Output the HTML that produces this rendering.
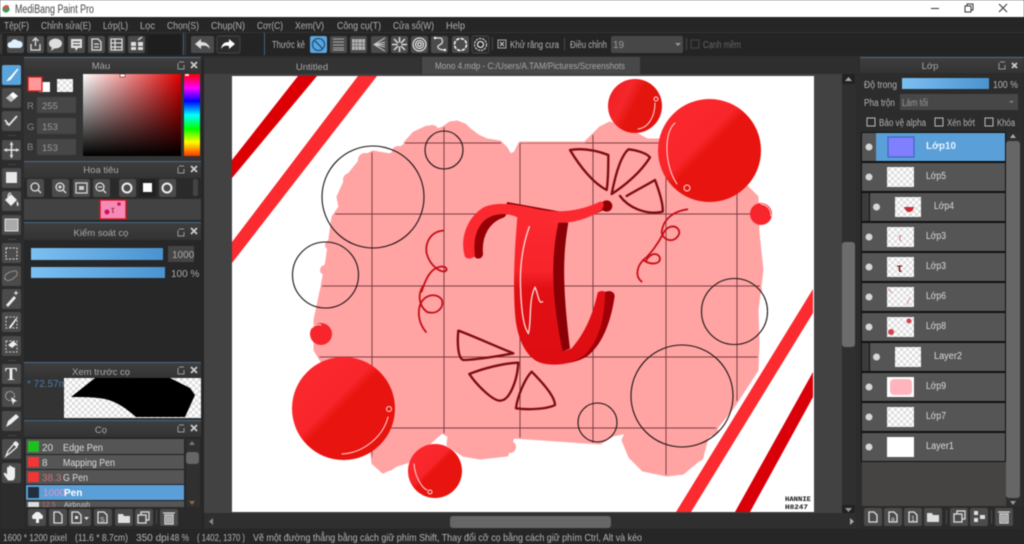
<!DOCTYPE html>
<html><head><meta charset="utf-8"><title>MediBang Paint Pro</title>
<style>
html,body{margin:0;padding:0;background:#262626;width:1024px;height:544px;overflow:hidden}
svg{display:block;position:absolute;left:0;top:0;filter:blur(.4px)}
text{font-family:"Liberation Sans","DejaVu Sans",sans-serif;font-size:10px;fill:#b4b4b4}
.h{fill:#a8a8a8;text-anchor:middle;font-size:9.5px}
.m{font-size:10.5px;fill:#b0b0b0}
.l{fill:#dcdcdc;font-size:10px}
.b{fill:#4b4b4b}
.i{fill:#dedede}
.s{fill:none;stroke:#dedede;stroke-width:1.3}
.p{fill:none;stroke:#1c1413;stroke-width:1.1}
.t{fill:none;stroke:#7c0d12;stroke-width:7;stroke-linejoin:round;stroke-linecap:round}
.c{fill:none;stroke:#c40f18;stroke-width:1.8;stroke-linecap:round}
.hl{fill:none;stroke:#ffdcd8;stroke-width:1;stroke-linecap:round}
.sep{fill:#4a4a4a}
</style></head><body>
<svg width="1024" height="544" viewBox="0 0 1024 544" xmlns="http://www.w3.org/2000/svg">
<defs>
<pattern id="ck" width="10" height="10" patternUnits="userSpaceOnUse"><rect width="10" height="10" fill="#fff"/><rect width="5" height="5" fill="#ddd"/><rect x="5" y="5" width="5" height="5" fill="#ddd"/></pattern>
<pattern id="ck2" width="6" height="6" patternUnits="userSpaceOnUse"><rect width="6" height="6" fill="#fff"/><rect width="3" height="3" fill="#ddd"/><rect x="3" y="3" width="3" height="3" fill="#ddd"/></pattern>
<linearGradient id="sl" x1="0" x2="1" y1="0" y2="0"><stop offset="0" stop-color="#7cc0f2"/><stop offset="1" stop-color="#4a93cf"/></linearGradient>
<linearGradient id="hor" x1="0" x2="1" y1="0" y2="0"><stop offset="0" stop-color="#fff"/><stop offset="1" stop-color="#e00000"/></linearGradient>
<linearGradient id="ver" x1="0" x2="0" y1="0" y2="1"><stop offset="0" stop-color="#000" stop-opacity="0"/><stop offset="1" stop-color="#000"/></linearGradient>
<linearGradient id="hue" x1="0" x2="0" y1="0" y2="1"><stop offset="0" stop-color="#f00"/><stop offset=".17" stop-color="#f0f"/><stop offset=".33" stop-color="#00f"/><stop offset=".5" stop-color="#0ff"/><stop offset=".67" stop-color="#0f0"/><stop offset=".83" stop-color="#ff0"/><stop offset="1" stop-color="#f30"/></linearGradient>
<linearGradient id="ball" x1=".25" y1=".25" x2=".65" y2=".65"><stop offset="0" stop-color="#fa282d"/><stop offset=".42" stop-color="#f8262b"/><stop offset=".6" stop-color="#e8140f"/><stop offset="1" stop-color="#e8140f"/></linearGradient>
<linearGradient id="ball2" x1="0" y1=".1" x2="1" y2=".6"><stop offset="0" stop-color="#ee1f24"/><stop offset=".35" stop-color="#f4272b"/><stop offset=".55" stop-color="#e4150f"/><stop offset="1" stop-color="#e4150f"/></linearGradient>
<linearGradient id="body" gradientUnits="userSpaceOnUse" x1="0" y1="110" x2="0" y2="560"><stop offset="0" stop-color="#fb2a30"/><stop offset=".36" stop-color="#f7242a"/><stop offset=".48" stop-color="#e21015"/><stop offset="1" stop-color="#dd0d12"/></linearGradient>
<linearGradient id="hdr" x1="0" x2="0" y1="0" y2="1"><stop offset="0" stop-color="#3e3e3e"/><stop offset="1" stop-color="#333"/></linearGradient>
<clipPath id="cv"><rect x="232" y="76" width="582" height="436"/></clipPath>
<clipPath id="pk"><polygon points="405,143 414,133 427,127 437,130 443,128 450,123 457,122 465,125 470,130 478,136 487,140 500,142 506,148 510,155 515,153 520,143 585,143 600,128 610,123 625,128 647,140 700,140 747,187 757,197 758,233 762,270 757,310 758,343 757,370 733,407 717,427 707,438 702,457 683,473 667,475 643,470 630,457 623,440 627,432 613,435 600,443 513,437 507,455 480,458 463,455 448,445 449,436 442,432 436,437 425,447 407,462 397,465 383,472 373,463 370,440 315,350 315,320 322,287 327,260 333,217 340,207 338,197 347,177 363,157 373,152 390,155 405,145"/></clipPath>
</defs>

<!-- base -->
<rect width="1024" height="544" fill="#262626"/>
<rect width="1024" height="17" fill="#fff"/>
<rect y="17" width="1024" height="16" fill="#262626"/>
<rect y="33" width="1024" height="23" fill="#242424"/>
<rect y="32" width="1024" height="1" fill="#333"/>
<rect y="56" width="1024" height="1" fill="#2f2f2f"/>

<!-- title bar -->
<circle cx="6" cy="9" r="3.6" fill="#3e9a55"/><path d="M3,8 a3.6,3.6 0 0 1 6,-2 l-2,3z" fill="#d8504c"/>
<text x="15" y="13" style="font-size:11.5px;fill:#444" textLength="79" lengthAdjust="spacingAndGlyphs">MediBang Paint Pro</text>
<rect x="931" y="8" width="8" height="1" fill="#333"/>
<rect x="965" y="6" width="6" height="6" fill="none" stroke="#333"/><path d="M967,6V4h6v6h-2" fill="none" stroke="#333"/>
<path d="M999,4l8,8M1007,4l-8,8" stroke="#333" stroke-width="1"/>

<!-- menu -->
<text class="m" x="4" y="29" textLength="25" lengthAdjust="spacingAndGlyphs">Tệp(F)</text>
<text class="m" x="41" y="29" textLength="50" lengthAdjust="spacingAndGlyphs">Chỉnh sửa(E)</text>
<text class="m" x="103" y="29" textLength="25" lengthAdjust="spacingAndGlyphs">Lớp(L)</text>
<text class="m" x="140" y="29" textLength="15" lengthAdjust="spacingAndGlyphs">Lọc</text>
<text class="m" x="167" y="29" textLength="32" lengthAdjust="spacingAndGlyphs">Chọn(S)</text>
<text class="m" x="211" y="29" textLength="34" lengthAdjust="spacingAndGlyphs">Chụp(N)</text>
<text class="m" x="257" y="29" textLength="26" lengthAdjust="spacingAndGlyphs">Cơr(C)</text>
<text class="m" x="295" y="29" textLength="29" lengthAdjust="spacingAndGlyphs">Xem(V)</text>
<text class="m" x="337" y="29" textLength="44" lengthAdjust="spacingAndGlyphs">Công cụ(T)</text>
<text class="m" x="393" y="29" textLength="41" lengthAdjust="spacingAndGlyphs">Cửa sổ(W)</text>
<text class="m" x="446" y="29" textLength="19" lengthAdjust="spacingAndGlyphs">Help</text>

<!-- toolbar -->
<rect x="0" y="34" width="2" height="20" fill="#3e3e3e"/>
<rect x="7" y="36" width="17" height="17" rx="2" class="b"/><path d="M10,48a3,3 0 0 1 1,-6a4,4 0 0 1 7,-1a3.5,3.5 0 0 1 2,7z" fill="#dff0ff"/>
<rect x="27" y="36" width="17" height="17" rx="2" class="b"/><path d="M31,44v6h9v-6M35.500,46v-8m-3,3l3,-3l3,3" class="s"/>
<rect x="47" y="36" width="17" height="17" rx="2" class="b"/><ellipse cx="55.500" cy="43.500" rx="6.500" ry="5" class="i"/><path d="M52,47l-1,4l4,-3z" class="i"/>
<rect x="68" y="36" width="17" height="17" rx="2" class="b"/><path d="M71,39h11v9h-4l-2,3l-1,-3h-4z" class="i"/><path d="M73,42h7M73,45h7" stroke="#444"/>
<rect x="88" y="36" width="17" height="17" rx="2" class="b"/><path d="M92,39h6l3,3v8h-9z" class="s"/><path d="M94,44h5M94,47h5" class="s"/>
<rect x="108" y="36" width="17" height="17" rx="2" class="b"/><path d="M111,39h11v11h-11zM111,43h11M111,47h11M115,39v11" class="s"/>
<rect x="128" y="36" width="17" height="17" rx="2" class="b"/><path d="M131,42h5v4h-5zM138,42h5v4h-5zM131,47h5v3h-5zM138,47h5v3h-5z" class="i"/><path d="M138,40l4,-3" class="s"/>
<rect x="148" y="35" width="33" height="20" fill="#1e1e1e"/>
<rect x="183" y="33" width="1" height="22" fill="#45617c"/><rect x="185" y="33" width="1" height="22" fill="#3a3a3a"/>
<rect x="191" y="36" width="23" height="17" rx="2" class="b"/><path d="M195,44l6,-5v3c5,0 8,2 9,7c-2,-3 -5,-4 -9,-3v3z" class="i"/>
<rect x="217" y="36" width="23" height="17" rx="2" fill="#2b2b2b" stroke="#444"/><path d="M235,44l-6,-5v3c-5,0 -7,2 -8,7c2,-3 4,-4 8,-3v3z" fill="#fff"/>
<rect x="264" y="33" width="1" height="22" fill="#45617c"/>
<text x="272" y="48" style="font-size:10px" textLength="33" lengthAdjust="spacingAndGlyphs">Thước kẻ</text>
<rect x="310" y="36" width="17" height="17" rx="2" fill="#5ba5dd"/><circle cx="318.500" cy="44.500" r="6" fill="none" stroke="#25547e" stroke-width="1.300"/><path d="M314,40l9,9" stroke="#25547e" stroke-width="1.300"/>
<rect x="330" y="36" width="17" height="17" rx="2" class="b"/><path d="M333,39h11M333,42h11M333,45h11M333,48h11M333,50h11" stroke="#aaa"/>
<rect x="350" y="36" width="17" height="17" rx="2" class="b"/><rect x="352" y="39" width="13" height="11" fill="#b5b5b5"/><path d="M355,39v11M358,39v11M362,39v11M352,43h13M352,46h13" stroke="#666" stroke-width=".7"/>
<rect x="371" y="36" width="17" height="17" rx="2" class="b"/><path d="M385,38l-11,6.500l11,6.500M385,42l-11,2.500h11M385,47l-11,-2.500" stroke="#ccc" fill="none"/>
<rect x="391" y="36" width="17" height="17" rx="2" class="b"/><path d="M399.500,37v15M392,44.500h15M394,39l11,11M405,39l-11,11" stroke="#ddd" stroke-width="1.500"/><circle cx="399.500" cy="44.500" r="2" fill="#4b4b4b"/>
<rect x="411" y="36" width="17" height="17" rx="2" class="b"/><circle cx="419.500" cy="44.500" r="6.500" class="s"/><circle cx="419.500" cy="44.500" r="4" class="s"/><circle cx="419.500" cy="44.500" r="1.800" class="s"/>
<rect x="431" y="36" width="17" height="17" rx="2" class="b"/><path d="M435,38h5c3,0 3,5 1,6l-3,2c-1,3 3,4 8,4" class="s"/><circle cx="435" cy="38" r="1.200" fill="#fff"/><circle cx="445" cy="50" r="1.200" fill="#fff"/>
<rect x="452" y="36" width="17" height="17" rx="2" class="b"/><circle cx="460.500" cy="44.500" r="6" fill="none" stroke="#fff" stroke-width="1.500" stroke-dasharray="3.500 1.200"/>
<rect x="472" y="36" width="17" height="17" rx="2" fill="#2b2b2b" stroke="#444"/><circle cx="480.500" cy="44.500" r="6" fill="none" stroke="#ccc" stroke-width="1.200" stroke-dasharray="2.500 .8"/><circle cx="480.500" cy="44.500" r="3" class="s"/>
<rect x="492" y="37" width="1" height="13" class="sep"/>
<rect x="498" y="40" width="8" height="8" fill="#2c2c2c" stroke="#aaa"/><path d="M500,42l4,4M504,42l-4,4" stroke="#ccc"/>
<text x="510" y="48" style="font-size:10px" textLength="49" lengthAdjust="spacingAndGlyphs">Khử răng cưa</text>
<rect x="564" y="38" width="1" height="12" class="sep"/>
<text x="570" y="48" style="font-size:10px" textLength="37" lengthAdjust="spacingAndGlyphs">Điều chỉnh</text>
<rect x="611" y="36" width="72" height="17" rx="2" fill="#474747"/>
<text x="613" y="48" style="font-size:10px;fill:#999">19</text>
<path d="M675,43h6l-3,3z" fill="#999"/>
<rect x="686" y="38" width="1" height="12" class="sep"/>
<rect x="691" y="40" width="8" height="8" fill="none" stroke="#444"/>
<text x="703" y="48" style="font-size:10px;fill:#666" textLength="38" lengthAdjust="spacingAndGlyphs">Cạnh mềm</text>

<!-- tools column -->
<rect x="0" y="57" width="24" height="472" fill="#2c2c2c"/>
<rect x="2" y="65" width="19" height="20" rx="2" fill="#5ba5dd"/><path d="M6,81c2,-1 2,-3 4,-4l7,-8c1,-1 2,0 1,1l-6,8c-1,2 -3,3 -6,3z" fill="#fff"/>
<rect x="2" y="88" width="19" height="20" rx="2" class="b"/><path d="M6,98l7,-6l5,4l-7,6z" fill="#fff"/><path d="M6,98l4,-3l4,4l-3,3z" fill="#bbb"/>
<rect x="2" y="111" width="19" height="20" rx="2" class="b"/><path d="M5,120l4,5l8,-9" fill="none" stroke="#e5e5e5" stroke-width="1.800"/><circle cx="7" cy="124" r="1" fill="#ddd"/>
<rect x="8" y="135" width="8" height="1" fill="#444"/>
<rect x="2" y="140" width="19" height="20" rx="2" class="b"/><path d="M11.500,142v16M4,150h15" stroke="#e5e5e5" stroke-width="1.500"/><path d="M9.500,145l2,-3l2,3zM9.500,155l2,3l2,-3zM7,148l-3,2l3,2zM16,148l3,2l-3,2z" class="i"/>
<rect x="8" y="164" width="8" height="1" fill="#444"/>
<rect x="2" y="168" width="19" height="20" rx="2" class="b"/><rect x="6" y="172" width="11" height="11" fill="#e8e8e8"/>
<rect x="2" y="191" width="19" height="20" rx="2" class="b"/><path d="M5,200l6,-6l6,6l-6,6z" fill="#eee"/><path d="M8,197c0,-3 1,-4 3,-4" class="s"/><path d="M17,201c2,2 2,4 1,5s-2,-2 -1,-5z" fill="#ddd"/>
<rect x="2" y="215" width="19" height="20" rx="2" class="b"/><rect x="5" y="219" width="13" height="12" fill="#aaa" stroke="#ddd"/>
<rect x="8" y="239" width="8" height="1" fill="#444"/>
<rect x="2" y="243" width="19" height="20" rx="2" class="b"/><rect x="6" y="248" width="11" height="11" fill="none" stroke="#ddd" stroke-dasharray="2 1.500"/>
<rect x="2" y="266" width="19" height="20" rx="2" class="b"/><path d="M5,279c-2,-5 6,-8 10,-8c3,0 3,4 0,6c-3,3 -8,5 -10,2z" fill="none" stroke="#bbb" stroke-dasharray="1.500 1"/>
<rect x="2" y="289" width="19" height="20" rx="2" class="b"/><path d="M6,305l8,-9l2,2l-8,9z" fill="#eee"/><path d="M16,291v4M14,293h4" stroke="#eee"/>
<rect x="2" y="312" width="19" height="20" rx="2" class="b"/><rect x="6" y="317" width="11" height="11" fill="none" stroke="#ccc" stroke-dasharray="2 1.500"/><path d="M9,327l7,-9l1,1l-6,9z" fill="#eee"/>
<rect x="2" y="336" width="19" height="20" rx="2" class="b"/><rect x="6" y="341" width="11" height="11" fill="none" stroke="#ccc" stroke-dasharray="2 1.500"/><path d="M8,345l5,-4l4,3l-5,4z" fill="#eee"/>
<rect x="8" y="360" width="8" height="1" fill="#444"/>
<rect x="2" y="364" width="19" height="20" rx="2" class="b"/><text x="5" y="380" style="font-family:'Liberation Serif',serif;font-size:18px;font-weight:bold;fill:#eee">T</text>
<rect x="2" y="387" width="19" height="20" rx="2" class="b"/><circle cx="10" cy="396" r="4.500" fill="none" stroke="#ccc" stroke-dasharray="1.500 1"/><path d="M11,397l6,4l-3,1l-1,3z" fill="#eee"/>
<rect x="2" y="411" width="19" height="20" rx="2" class="b"/><path d="M6,427l2,-6l8,-7l3,3l-8,7z" fill="#eee"/>
<rect x="8" y="435" width="8" height="1" fill="#444"/>
<rect x="2" y="439" width="19" height="20" rx="2" class="b"/><path d="M6,456l2,-5l6,-7l3,3l-7,6z" fill="none" stroke="#eee" stroke-width="1.300"/><path d="M13,443l3,-2l3,3l-2,3z" fill="#eee"/>
<rect x="2" y="463" width="19" height="20" rx="2" class="b"/><path d="M7,479c-2,-3 -4,-5 -3,-6s3,1 3,2l0,-7c0,-1.500 2,-1.500 2,0v-1.500c0,-1.500 2,-1.500 2,0v1c0,-1.500 2,-1.500 2,0v1c0,-1.500 2,-1.500 2,0v7c0,3 -1,5 -3,5h-4z" fill="#eee"/>

<!-- left panels -->
<rect x="24" y="57" width="178" height="472" fill="#272727"/>
<!-- Màu -->
<rect x="24" y="57" width="177" height="1" fill="#4a6a88"/>
<rect x="24" y="58" width="177" height="16" fill="url(#hdr)"/>
<text class="h" x="101" y="69">Màu</text>
<path d="M179,62h5m-6,1v6h6v-4" fill="none" stroke="#999"/><path d="M191,62l6,6M197,62l-6,6" stroke="#ccc" stroke-width="1.800"/>
<rect x="24" y="74" width="177" height="87" fill="#333"/>
<rect x="39" y="82" width="11" height="10" fill="#fff"/>
<rect x="28" y="77" width="14" height="14" fill="#ff9999" stroke="#d01f1f" stroke-width="1.300"/>
<rect x="57" y="79" width="16" height="13" fill="url(#ck2)"/>
<text x="27" y="109" style="fill:#888;font-size:9.500px">R</text><rect x="37" y="97" width="39" height="16" rx="1" fill="#474747"/><text x="42" y="109" style="fill:#999;font-size:9.500px">255</text>
<text x="27" y="130" style="fill:#888;font-size:9.500px">G</text><rect x="37" y="118" width="39" height="16" rx="1" fill="#474747"/><text x="42" y="130" style="fill:#999;font-size:9.500px">153</text>
<text x="27" y="150" style="fill:#888;font-size:9.500px">B</text><rect x="37" y="139" width="39" height="16" rx="1" fill="#474747"/><text x="42" y="151" style="fill:#999;font-size:9.500px">153</text>
<rect x="83" y="74" width="98" height="82" fill="url(#hor)"/><rect x="83" y="74" width="98" height="82" fill="url(#ver)"/>
<rect x="120" y="74" width="5" height="3" fill="#fff" stroke="#600" stroke-width=".5"/>
<rect x="184" y="74" width="16" height="82" fill="url(#hue)"/>
<rect x="185" y="74" width="4" height="2" fill="#fdd"/>
<!-- Hoa tiêu -->
<rect x="24" y="161" width="177" height="1" fill="#4a6a88"/>
<rect x="24" y="162" width="177" height="16" fill="url(#hdr)"/>
<text class="h" x="101" y="173">Hoa tiêu</text>
<path d="M179,166h5m-6,1v6h6v-4" fill="none" stroke="#999"/><path d="M191,166l6,6M197,166l-6,6" stroke="#ccc" stroke-width="1.800"/>
<rect x="24" y="178" width="177" height="21" fill="#2a2a2a"/>
<rect x="27" y="179" width="17" height="18" rx="2" class="b"/><circle cx="35" cy="187" r="4" class="s"/><path d="M38,190l3,3" class="s"/>
<rect x="52" y="179" width="17" height="18" rx="2" class="b"/><circle cx="60" cy="187" r="4" class="s"/><path d="M63,190l3,3M58,187h4M60,185v4" class="s"/>
<rect x="73" y="179" width="17" height="18" rx="2" class="b"/><rect x="76" y="183" width="11" height="10" fill="none" stroke="#ccc" stroke-width="1.400"/><rect x="79" y="186" width="5" height="4" fill="#ccc"/>
<rect x="93" y="179" width="17" height="18" rx="2" class="b"/><circle cx="100" cy="187" r="4" class="s"/><path d="M103,190l3,3M98,187h4" class="s"/>
<rect x="119" y="179" width="17" height="18" rx="2" class="b"/><circle cx="127" cy="188" r="4.500" fill="none" stroke="#eee" stroke-width="2"/>
<rect x="139" y="179" width="17" height="18" rx="2" fill="#222"/><rect x="143" y="183" width="9" height="9" fill="#fff"/>
<rect x="159" y="179" width="17" height="18" rx="2" class="b"/><circle cx="167" cy="188" r="4.500" fill="none" stroke="#eee" stroke-width="2"/>
<rect x="193" y="179" width="5" height="17" rx="2" fill="#444"/>
<rect x="24" y="199" width="177" height="21" fill="#424242"/>
<rect x="100" y="200" width="26" height="19" fill="#f58ab5" stroke="#d01020" stroke-width="1.300"/>
<circle cx="107" cy="212" r="2.500" fill="#d01060"/><circle cx="119" cy="204" r="1.800" fill="#d01060"/><text x="111" y="213" style="font-size:9px;fill:#901030">τ</text>
<!-- Kiểm soát -->
<rect x="24" y="222" width="177" height="1" fill="#4a6a88"/>
<rect x="24" y="223" width="177" height="17" fill="url(#hdr)"/>
<text class="h" x="101" y="236">Kiểm soát cọ</text>
<path d="M179,229h5m-6,1v6h6v-4" fill="none" stroke="#999"/><path d="M191,228l6,6M197,228l-6,6" stroke="#ccc" stroke-width="1.800"/>
<rect x="31" y="248" width="132" height="12" fill="url(#sl)"/>
<rect x="168" y="246" width="26" height="16" fill="#444"/><text x="172" y="258" style="fill:#aaa;font-size:10px">1000</text>
<rect x="31" y="267" width="134" height="11" fill="url(#sl)"/>
<text x="171" y="277" style="fill:#aaa;font-size:10px">100 %</text>
<!-- Xem trước -->
<rect x="24" y="362" width="177" height="1" fill="#4a6a88"/>
<rect x="24" y="363" width="177" height="15" fill="url(#hdr)"/>
<text class="h" x="101" y="375">Xem trước cọ</text>
<path d="M179,367h5m-6,1v6h6v-4" fill="none" stroke="#999"/><path d="M191,367l6,6M197,367l-6,6" stroke="#ccc" stroke-width="1.800"/>
<rect x="24" y="378" width="177" height="41" fill="#333"/>
<text x="27" y="387" style="fill:#4e7ba5;font-size:10px">* 72.57m</text>
<rect x="64" y="378" width="137" height="40" fill="url(#ck2)"/>
<path d="M71,397L95,378H170L190,388L195,395L185,417H136C128,410 118,402 105,399C95,397 82,397 71,397Z" fill="#000"/>
<!-- Cọ -->
<rect x="24" y="420" width="177" height="1" fill="#4a6a88"/>
<rect x="24" y="421" width="177" height="16" fill="url(#hdr)"/>
<text class="h" x="101" y="433">Cọ</text>
<path d="M179,425h5m-6,1v6h6v-4" fill="none" stroke="#999"/><path d="M191,425l6,6M197,425l-6,6" stroke="#ccc" stroke-width="1.800"/>
<rect x="25" y="439" width="159" height="68" fill="#222"/>
<rect x="26" y="439" width="158" height="15" fill="#555"/>
<rect x="26" y="455" width="158" height="14" fill="#555"/>
<rect x="26" y="470" width="158" height="14" fill="#555"/>
<rect x="26" y="485" width="158" height="15" fill="#5a9fd8"/>
<rect x="26" y="501" width="158" height="6" fill="#555"/>
<rect x="28" y="441" width="11" height="11" fill="#1fbf1f"/>
<rect x="28" y="457" width="11" height="10" fill="#f23535"/>
<rect x="28" y="472" width="11" height="10" fill="#f23535"/>
<rect x="28" y="487" width="11" height="11" fill="#23303c"/>
<rect x="28" y="502" width="11" height="5" fill="#ddd"/>
<text x="42" y="451" class="l">20</text><text x="63" y="451" class="l" textLength="40" lengthAdjust="spacingAndGlyphs">Edge Pen</text>
<text x="42" y="466" class="l">8</text><text x="63" y="466" class="l" textLength="52" lengthAdjust="spacingAndGlyphs">Mapping Pen</text>
<text x="42" y="481" style="fill:#c87474;font-size:10px">38.3</text><text x="63" y="481" class="l" textLength="25" lengthAdjust="spacingAndGlyphs">G Pen</text>
<text x="43" y="496" style="fill:#dd9ac8;font-size:10px">1000</text><text x="64" y="496" style="fill:#fff;font-size:10px;font-weight:bold">Pen</text>
<text x="42" y="507" style="fill:#b87474;font-size:7px">12.5</text><text x="64" y="507" style="fill:#ccc;font-size:7px">Airbrush</text>
<rect x="186" y="439" width="14" height="68" fill="#303030"/>
<path d="M189,445l3,-4l3,4z" fill="#777"/><rect x="186" y="452" width="13" height="12" rx="3" fill="#666"/><path d="M189,501l3,4l3,-4z" fill="#8a6a50"/>
<rect x="24" y="507" width="177" height="22" fill="#2a2a2a"/>
<rect x="28" y="509" width="18" height="17" rx="2" class="b"/><path d="M33,519a3,3 0 0 1 1,-5a4,4 0 0 1 7,0a3,3 0 0 1 1,5h-3v4h-3v-4z" fill="#f0f0f0"/>
<rect x="49" y="509" width="18" height="17" rx="2" class="b"/><path d="M54,512h5l3,3v8h-8z" class="s"/>
<rect x="69" y="509" width="22" height="17" rx="2" class="b"/><path d="M72,512h6l3,3v8h-9z" class="s"/><rect x="75" y="516" width="3" height="3" class="i"/><path d="M84,517h5l-2.500,3z" class="i"/>
<rect x="94" y="509" width="18" height="17" rx="2" class="b"/><path d="M98,512h6l3,3v8h-9z" class="s"/><text x="100" y="522" style="font-size:7px;fill:#ddd">S</text>
<rect x="115" y="509" width="18" height="17" rx="2" class="b"/><path d="M118,514h5l1,2h6v7h-12z" class="i"/>
<rect x="135" y="509" width="18" height="17" rx="2" class="b"/><rect x="141" y="512" width="8" height="8" class="s"/><rect x="138" y="515" width="8" height="8" class="s" style="fill:#4b4b4b"/>
<rect x="156" y="510" width="1" height="14" class="sep"/>
<rect x="160" y="509" width="18" height="17" rx="2" class="b"/><path d="M163,513h12M165,515h8v9h-8zM167,516v7M169,516v7M171,516v7" class="s"/>

<!-- canvas region -->
<rect x="204" y="57" width="654" height="472" fill="#2c2c2c"/>
<rect x="204" y="58" width="654" height="16" fill="#2e2e2e"/>
<rect x="204" y="58" width="216" height="16" fill="#333"/>
<text class="h" x="312" y="70">Untitled</text>
<rect x="422" y="57" width="218" height="17" fill="#484848"/>
<text class="h" x="530" y="69" textLength="190" lengthAdjust="spacingAndGlyphs">Mono 4.mdp - C:/Users/A.TAM/Pictures/Screenshots</text>
<rect x="204" y="74" width="638" height="439" fill="#424242"/>
<rect x="232" y="76" width="582" height="436" fill="#fff"/>

<!-- artwork -->
<g clip-path="url(#cv)">
<polygon points="298,76 317,76 232,178 232,160" fill="#dc0005"/>
<polygon points="358,76 377,76 232,263 232,242" fill="#fb2b30"/>
<polygon points="813,289 813,313 691,512 676,512" fill="#fb2b30"/>
<polygon points="813,372 813,397 750,512 735,512" fill="#d9000a"/>

<g fill="#ffa3a3">
<polygon stroke="#ffa3a3" stroke-width="3" stroke-linejoin="round" points="405,143 414,133 427,127 437,130 443,128 450,123 457,122 465,125 470,130 478,136 487,140 500,142 506,148 510,155 515,153 520,143 585,143 600,128 610,123 625,128 647,140 700,140 747,187 757,197 758,233 762,270 757,310 758,343 757,370 733,407 717,427 707,438 702,457 683,473 667,475 643,470 630,457 623,440 627,432 613,435 600,443 513,437 507,455 480,458 463,455 448,445 449,436 442,432 436,437 425,447 407,462 397,465 383,472 373,463 370,440 315,350 315,320 322,287 327,260 333,217 340,207 338,197 347,177 363,157 373,152 390,155 405,145"/>
<circle cx="432" cy="132" r="7"/><circle cx="457" cy="129" r="7"/><circle cx="350" cy="180" r="7"/><circle cx="344" cy="195" r="6"/><circle cx="365" cy="160" r="7"/><circle cx="638" cy="452" r="8"/><circle cx="655" cy="466" r="8"/><circle cx="680" cy="467" r="8"/><circle cx="697" cy="455" r="7"/><circle cx="470" cy="448" r="7"/><circle cx="495" cy="450" r="7"/><circle cx="752" cy="205" r="7"/><circle cx="755" cy="250" r="6"/><circle cx="757" cy="290" r="5"/><circle cx="388" cy="463" r="8"/><circle cx="320" cy="325" r="6"/><circle cx="325" cy="270" r="5"/><circle cx="612" cy="134" r="11"/><circle cx="338" cy="222" r="6"/><circle cx="330" cy="245" r="5"/><circle cx="380" cy="158" r="6"/><circle cx="398" cy="152" r="6"/><circle cx="485" cy="146" r="6"/><circle cx="752" cy="350" r="5"/><circle cx="735" cy="395" r="6"/><circle cx="712" cy="430" r="6"/><circle cx="510" cy="447" r="6"/><circle cx="322" cy="345" r="6"/>
</g>

<g clip-path="url(#pk)" stroke="#7d3f42" stroke-width="1" fill="none">
<path d="M372,140V480M444,120V480M520,120V480M593,120V480M666,120V480M737,120V480M300,143H770M300,214H770M300,286H770M300,357H770M300,428H770"/>
</g>

<!-- outline circles -->
<circle class="p" cx="373" cy="197" r="51"/>
<circle class="p" cx="444" cy="150" r="19"/>
<circle class="p" cx="325.500" cy="275" r="33"/>
<circle class="p" cx="734.500" cy="311.500" r="33"/>
<circle class="p" cx="682" cy="396" r="51"/>
<circle class="p" cx="597.500" cy="422.500" r="19.500"/>

<!-- balls -->
<circle cx="635" cy="106" r="27" fill="url(#ball2)"/>
<path class="hl" d="M638,129C648,128 655,117 655,103"/><circle class="hl" cx="656" cy="99" r="2"/>
<circle cx="709.500" cy="150.500" r="51.500" fill="url(#ball)"/>
<path class="hl" d="M675,123C663,133 665,167 677,184"/><circle class="hl" cx="687" cy="188" r="3"/>
<circle cx="761" cy="214" r="11" fill="#f7262c"/>
<path class="hl" d="M761,204C768,205 771,210 771,216"/>
<circle cx="321" cy="334" r="11" fill="#f7262c"/>
<path class="hl" d="M312,328C314,325 318,324 321,325"/>
<circle cx="343.500" cy="408.500" r="51.500" fill="url(#ball)"/>
<path class="hl" d="M342,454C363,453 383,437 388,417"/><circle class="hl" cx="389" cy="409" r="2.500"/>
<circle cx="435" cy="471" r="27" fill="url(#ball)"/>
<path class="hl" d="M414,464C415,477 422,488 427,490"/><circle class="hl" cx="430" cy="492" r="2"/>

<!-- curls -->
<g transform="translate(230 70) scale(.3333)">
<path class="c" style="stroke-width:5.400" d="M640,482C600,485 585,520 590,550C600,590 640,615 650,600C650,585 620,585 600,610C585,630 580,650 575,665"/>
</g>
<path class="c" d="M423,286C418,294 418,305 427,312C437,315 444,308 442,300C438,293 425,293 420,305C417,315 420,325 426,332"/>
<g transform="translate(600 70) scale(.3333)">
<path class="c" style="stroke-width:5.400" d="M262,418C215,425 190,450 185,485C185,510 225,525 238,490C238,465 205,460 190,490C175,520 150,555 130,570C110,590 105,620 125,635"/>
<path class="c" style="stroke-width:5.400" d="M130,570C150,585 180,585 180,565C175,545 150,550 140,570"/>
</g>

<!-- triangles -->
<g transform="translate(430 180) scale(.3333)">
<path class="t" d="M85,452C110,460 200,500 250,520C200,530 130,540 100,540C82,535 82,480 85,452Z"/>
<path class="t" d="M118,582C160,565 220,550 265,548C262,600 240,660 212,662C190,665 140,615 118,582Z"/>
<path class="t" d="M305,575C340,610 375,650 375,675C350,688 290,690 258,685C262,650 285,595 305,575Z"/>
</g>
<g transform="translate(600 70) scale(.3333)">
<path class="t" d="M85,238C110,240 140,250 150,262C120,310 70,350 35,372C45,320 60,260 85,238Z"/>
<path class="t" d="M80,378C110,360 140,345 165,330C180,370 190,405 188,425C150,435 90,420 60,378"/>
<path class="t" d="M-90,240C-60,235 -20,238 25,255C25,290 25,330 20,360C-20,340 -60,290 -90,240Z"/>
</g>

<!-- T letter -->
<g transform="translate(430 180) scale(.3333)">
<path d="M145,222C140,160 170,115 215,100" fill="none" stroke="#960006" stroke-width="28" stroke-linecap="round"/>
<path d="M230,72C300,85 360,95 430,108C470,108 500,95 530,78" fill="none" stroke="#8f0005" stroke-width="12"/>
<circle cx="530" cy="78" r="17" fill="#8f0005"/>
<path d="M105,230C88,180 110,110 165,80C220,60 280,80 350,92C410,100 470,85 510,65C522,63 525,75 515,90C470,120 420,130 385,128L262,112C225,95 180,100 155,130C135,155 130,190 135,228C125,238 110,238 105,230Z" fill="#fb2a30"/>
<path d="M525,336C545,328 558,340 553,355C540,440 510,500 470,530C440,548 400,553 370,552L440,505C480,450 505,400 515,345Z" fill="#a00008"/>
<path d="M262,110L385,128C370,210 365,300 385,430L398,515L425,505C465,460 490,400 503,338C510,332 520,332 525,336C525,420 505,480 470,520C430,555 370,560 330,548C285,530 260,470 255,400C248,300 255,200 262,110Z" fill="url(#body)"/>
<path d="M385,128L415,128C400,220 395,300 420,505L398,515C375,400 355,270 385,128Z" fill="#8a0006"/>
<path d="M298,140C280,190 268,250 272,330C274,390 280,440 295,460C305,430 295,360 315,322C325,340 325,375 338,365" fill="none" stroke="#ffdcd8" stroke-width="4" stroke-linecap="round"/>
</g>
<text x="785" y="501" style="font-size:6.500px;font-weight:bold;fill:#111;font-family:'Liberation Mono',monospace" textLength="26" lengthAdjust="spacingAndGlyphs">HANNIE</text>
<text x="785" y="509" style="font-size:6.500px;font-weight:bold;fill:#111;font-family:'Liberation Mono',monospace" textLength="23" lengthAdjust="spacingAndGlyphs">H8247</text>
</g>

<!-- scrollbars -->
<rect x="842" y="74" width="14" height="439" fill="#2f2f2f"/>
<rect x="842" y="74" width="13" height="10" fill="#222"/><path d="M845,81l3.500,-4l3.500,4z" fill="#aaa"/>
<rect x="842" y="242" width="13" height="105" rx="3" fill="#6c6c6c"/>
<rect x="842" y="505" width="13" height="10" fill="#222"/><path d="M845,508l3.500,4l3.500,-4z" fill="#999"/>
<rect x="204" y="513" width="652" height="15" fill="#2f2f2f"/>
<rect x="450" y="516" width="161" height="12" rx="3" fill="#666"/>
<path d="M213,518v7l-4,-3.500z" fill="#888"/><path d="M850,518v7l4,-3.500z" fill="#aaa"/>

<!-- right panel -->
<rect x="858" y="57" width="166" height="472" fill="#2c2c2c"/>
<rect x="860" y="57" width="164" height="1" fill="#4a6a88"/>
<rect x="860" y="58" width="164" height="15" fill="url(#hdr)"/>
<text class="h" x="930" y="69">Lớp</text>
<path d="M1000,62h5m-6,1v6h6v-4" fill="none" stroke="#999"/><path d="M1012,63l5,5M1017,63l-5,5" stroke="#ccc" stroke-width="1.800"/>
<text x="864" y="88" style="font-size:10px" textLength="33" lengthAdjust="spacingAndGlyphs">Độ trong</text>
<rect x="902" y="78" width="87" height="11" fill="url(#sl)"/>
<text x="993" y="88" style="font-size:10px" textLength="25" lengthAdjust="spacingAndGlyphs">100 %</text>
<text x="864" y="106" style="font-size:10px" textLength="31" lengthAdjust="spacingAndGlyphs">Pha trộn</text>
<rect x="900" y="94" width="118" height="16" fill="#474747"/>
<text x="902" y="106" style="font-size:10px;fill:#999" textLength="26" lengthAdjust="spacingAndGlyphs">Làm tối</text>
<path d="M1009,101h5l-2.500,2z" fill="#888"/>
<rect x="867" y="118" width="8" height="8" fill="none" stroke="#bbb"/><text x="879" y="126" style="font-size:10px" textLength="47" lengthAdjust="spacingAndGlyphs">Bảo vệ alpha</text>
<rect x="935" y="118" width="8" height="8" fill="none" stroke="#bbb"/><text x="947" y="126" style="font-size:10px" textLength="28" lengthAdjust="spacingAndGlyphs">Xén bớt</text>
<rect x="985" y="118" width="8" height="8" fill="none" stroke="#bbb"/><text x="997" y="126" style="font-size:10px" textLength="18" lengthAdjust="spacingAndGlyphs">Khóa</text>

<rect x="861" y="132" width="145" height="330" fill="#111"/>
<rect x="862" y="462" width="144" height="44" fill="#454443"/>
<rect x="862" y="133" width="14" height="28" fill="#555"/><rect x="876" y="133" width="129" height="28" fill="#5a9fd8"/>
<rect x="862" y="163" width="143" height="28" fill="#555"/>
<rect x="862" y="193" width="7" height="28" fill="#3c3c3c"/><rect x="870" y="193" width="135" height="28" fill="#555"/>
<rect x="862" y="223" width="143" height="28" fill="#555"/>
<rect x="862" y="253" width="143" height="28" fill="#555"/>
<rect x="862" y="283" width="143" height="28" fill="#555"/>
<rect x="862" y="313" width="143" height="28" fill="#555"/>
<rect x="862" y="343" width="7" height="28" fill="#3c3c3c"/><rect x="870" y="343" width="135" height="28" fill="#555"/>
<rect x="862" y="373" width="143" height="28" fill="#555"/>
<rect x="862" y="403" width="143" height="28" fill="#555"/>
<rect x="862" y="433" width="143" height="28" fill="#555"/>
<g fill="#d6d6d6">
<circle cx="869" cy="147" r="3.500"/><circle cx="869" cy="177" r="3.500"/><circle cx="876.500" cy="207" r="3.500"/><circle cx="869" cy="237" r="3.500"/><circle cx="869" cy="267" r="3.500"/><circle cx="869" cy="297" r="3.500"/><circle cx="869" cy="327" r="3.500"/><circle cx="876.500" cy="357" r="3.500"/><circle cx="869" cy="387" r="3.500"/><circle cx="869" cy="417" r="3.500"/><circle cx="869" cy="447" r="3.500"/>
</g>
<rect x="888" y="137" width="26" height="20" fill="#8080ff" stroke="#3b5fb8"/>
<rect x="887" y="167" width="27" height="20" fill="url(#ck2)"/>
<rect x="895" y="197" width="26" height="20" fill="url(#ck2)"/><path d="M904,207h10c-1,4 -3,5 -5,5s-4,-2 -5,-5z" fill="#c92a35"/>
<rect x="887" y="227" width="27" height="20" fill="url(#ck2)"/><text x="898" y="241" style="font-size:10px;fill:#e06a70">τ</text>
<rect x="887" y="257" width="27" height="20" fill="url(#ck2)"/><text x="897" y="272" style="font-size:12px;fill:#7a1a22;font-weight:bold">τ</text>
<rect x="887" y="287" width="27" height="20" fill="url(#ck2)"/><path d="M888,289l4,4M910,297l-3,8" stroke="#e09090"/>
<rect x="887" y="317" width="27" height="20" fill="url(#ck2)"/><circle cx="891" cy="332" r="3" fill="#d04550"/><circle cx="909" cy="321" r="2.500" fill="#d04550"/>
<rect x="895" y="347" width="26" height="20" fill="url(#ck2)"/>
<rect x="887" y="377" width="27" height="20" fill="#fff"/><rect x="890" y="379" width="22" height="16" rx="4" fill="#ffb5bb"/>
<rect x="887" y="407" width="27" height="20" fill="url(#ck2)"/>
<rect x="887" y="437" width="27" height="20" fill="#fff"/>
<text x="926" y="149" style="font-size:10.500px;font-weight:bold;fill:#eaf4ff" textLength="30" lengthAdjust="spacingAndGlyphs">Lớp10</text>
<text x="926" y="179" class="l" textLength="20" lengthAdjust="spacingAndGlyphs">Lớp5</text>
<text x="934" y="209" class="l" textLength="20" lengthAdjust="spacingAndGlyphs">Lớp4</text>
<text x="926" y="239" class="l" textLength="20" lengthAdjust="spacingAndGlyphs">Lớp3</text>
<text x="926" y="269" class="l" textLength="20" lengthAdjust="spacingAndGlyphs">Lớp3</text>
<text x="926" y="299" class="l" textLength="20" lengthAdjust="spacingAndGlyphs">Lớp6</text>
<text x="926" y="329" class="l" textLength="20" lengthAdjust="spacingAndGlyphs">Lớp8</text>
<text x="934" y="359" class="l" textLength="28" lengthAdjust="spacingAndGlyphs">Layer2</text>
<text x="926" y="389" class="l" textLength="20" lengthAdjust="spacingAndGlyphs">Lớp9</text>
<text x="926" y="419" class="l" textLength="20" lengthAdjust="spacingAndGlyphs">Lớp7</text>
<text x="926" y="449" class="l" textLength="28" lengthAdjust="spacingAndGlyphs">Layer1</text>
<rect x="1006" y="133" width="14" height="374" fill="#2e2e2e"/>
<path d="M1010,138l3,-4l3,4z" fill="#aaa"/>
<rect x="1006" y="141" width="14" height="357" rx="3" fill="#666"/>
<path d="M1010,501l3,4l3,-4z" fill="#999"/>
<rect x="860" y="506" width="164" height="23" fill="#2a2a2a"/>
<rect x="864" y="508" width="18" height="18" rx="2" class="b"/><path d="M869,512h5l3,3v7h-8z" class="s"/>
<rect x="884" y="508" width="18" height="18" rx="2" class="b"/><path d="M889,512h5l3,3v7h-8z" class="s"/><text x="891" y="521" style="font-size:6.500px;fill:#ddd">a</text>
<rect x="904" y="508" width="18" height="18" rx="2" class="b"/><path d="M909,512h5l3,3v7h-8z" class="s"/><text x="911" y="521" style="font-size:7px;fill:#ddd">1</text>
<rect x="924" y="508" width="18" height="18" rx="2" class="b"/><path d="M927,513h5l1,2h6v7h-12z" class="i"/>
<rect x="946" y="510" width="1" height="14" class="sep"/>
<rect x="950" y="508" width="18" height="18" rx="2" class="b"/><rect x="957" y="511" width="8" height="8" class="s"/><rect x="954" y="514" width="8" height="8" class="s" style="fill:#4b4b4b"/>
<rect x="970" y="508" width="18" height="18" rx="2" class="b"/><rect x="974" y="511" width="4" height="4" class="i"/><rect x="974" y="518" width="4" height="4" class="i"/><rect x="980" y="515" width="5" height="4" class="i"/>
<rect x="991" y="510" width="1" height="14" class="sep"/>
<rect x="995" y="508" width="18" height="18" rx="2" class="b"/><path d="M998,512h12M1000,514h8v9h-8zM1002,515v7M1004,515v7M1006,515v7" class="s"/>

<!-- status bar -->
<rect y="529" width="1024" height="15" fill="#262626"/>
<text x="3" y="541" style="font-size:10px" textLength="64" lengthAdjust="spacingAndGlyphs">1600 * 1200 pixel</text>
<text x="75" y="541" style="font-size:10px" textLength="53" lengthAdjust="spacingAndGlyphs">(11.6 * 8.7cm)</text>
<text x="136" y="541" style="font-size:10px" textLength="33" lengthAdjust="spacingAndGlyphs">350 dpi</text>
<text x="170" y="541" style="font-size:10px" textLength="19" lengthAdjust="spacingAndGlyphs">48 %</text>
<text x="197" y="541" style="font-size:10px" textLength="48" lengthAdjust="spacingAndGlyphs">( 1402, 1370 )</text>
<text x="253" y="541" style="font-size:10.500px" textLength="389" lengthAdjust="spacingAndGlyphs">Vẽ một đường thẳng bằng cách giữ phím Shift, Thay đổi cỡ cọ bằng cách giữ phím Ctrl, Alt và kéo</text>
</svg>
</body></html>
